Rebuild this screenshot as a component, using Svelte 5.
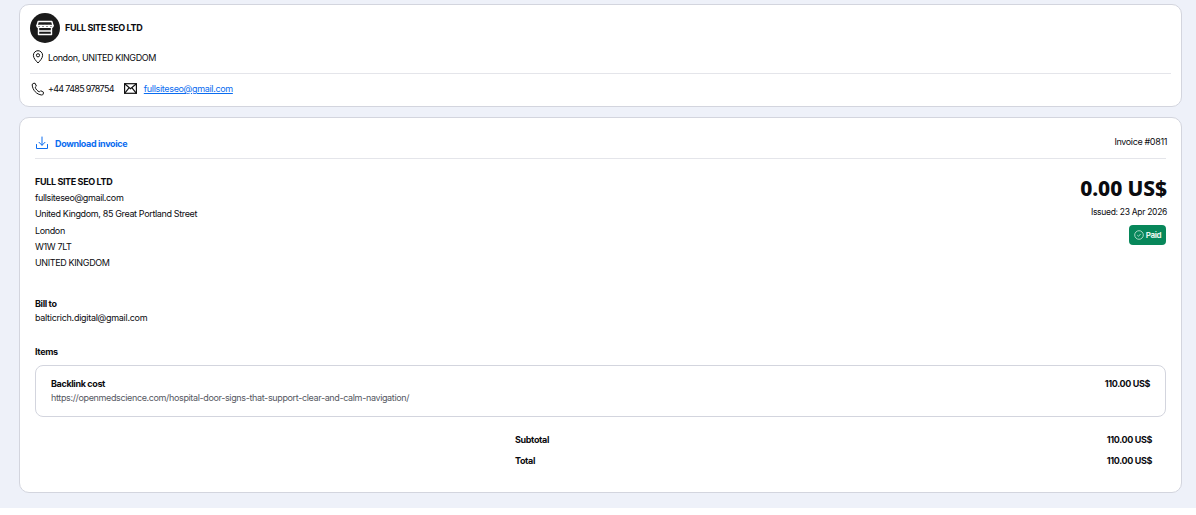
<script>
  const seller = ['fullsiteseo@gmail.com', 'United Kingdom, 85 Great Portland Street', 'London', 'W1W 7LT', 'UNITED KINGDOM'];
</script>

<div class="page">
  <section class="card head">
    <div class="brand">
      <span class="logo">
        <svg width="20" height="20" viewBox="0 0 20 20" fill="none" stroke="#fff" stroke-width="1.4" stroke-linejoin="round" stroke-linecap="round">
          <path d="M3.200 3.500h13.600l1.200 4c0 1.300-1 1.900-2 1.900s-2-.7-2-1.900c0 1.200-1 1.900-2 1.900s-2-.7-2-1.900c0 1.200-1 1.900-2 1.900s-2-.7-2-1.900c0 1.200-1 1.900-2 1.900s-2-.6-2-1.900z"/>
          <path d="M3.500 9.500v7h13v-7M2 7.500h16M3.500 13h13"/>
        </svg>
      </span>
      <b>FULL SITE SEO LTD</b>
    </div>
    <div class="loc">
      <svg width="14" height="14" viewBox="0 0 14 14" fill="none" stroke="#111" stroke-width="1">
        <path d="M7 13c-2-2.200-4.600-4.800-4.600-7.700a4.600 4.600 0 0 1 9.200 0C11.600 8.200 9 10.800 7 13z"/>
        <circle cx="7" cy="5.300" r="1.600"/>
      </svg>
      <span>London, UNITED KINGDOM</span>
    </div>
    <div class="contact">
      <svg width="14" height="14" viewBox="0 0 14 14" fill="none" stroke="#111" stroke-width="1" stroke-linejoin="round">
        <path d="M2.100 1.500l1.900-.3 1.400 2.900-1.200 1.100c.6 2.200 2.200 3.900 4.300 4.700l1.200-1.200 2.800 1.500-.3 1.900c-.2.600-.8 1-1.500.9C5.700 12.500 1.600 8.200 1.200 3c-.1-.7.300-1.300.9-1.500z"/>
      </svg>
      <span class="phone">+44 7485 978754</span>
      <svg class="mail" width="13" height="11" viewBox="0 0 13 11" fill="none" stroke="#111" stroke-width="1.200">
        <rect x=".6" y=".7" width="11.800" height="9.600"/>
        <path d="M.6.700l5.900 5 5.900-5M.6 10.300l4.400-5.500M12.400 10.300L8 4.800"/>
      </svg>
      <a href="#mail">fullsiteseo@gmail.com</a>
    </div>
  </section>

  <section class="card invoice">
    <div class="bar">
      <a class="dl" href="#dl">
        <svg width="14" height="14" viewBox="0 0 14 14" fill="none" stroke="#0a6cf0" stroke-width="1" stroke-linecap="round" stroke-linejoin="round">
          <path d="M7 1v8M4 6.300L7 9.300l3-3M1.500 8.500v4h11v-4"/>
        </svg>
        <span>Download invoice</span>
      </a>
      <span class="num">Invoice #0811</span>
    </div>

    <div class="top">
      <div class="seller">
        <b>FULL SITE SEO LTD</b>
        {#each seller as line}<span>{line}</span>{/each}
      </div>
      <div class="sum">
        <strong>0.00 US$</strong>
        <span>Issued: 23 Apr 2026</span>
        <em>
          <svg width="10" height="10" viewBox="0 0 10 10" fill="none" stroke="#cfe9dc" stroke-width=".8">
            <circle cx="5" cy="5" r="4.300"/><path d="M3.300 5.200l1.200 1.100 2.200-2.400"/>
          </svg>
          Paid
        </em>
      </div>
    </div>

    <div class="bill">
      <b>Bill to</b>
      <span class="bill-mail">balticrich.digital@gmail.com</span>
    </div>

    <b class="items-t">Items</b>
    <div class="item">
      <div class="item-l">
        <b>Backlink cost</b>
        <span>https://openmedscience.com/hospital-door-signs-that-support-clear-and-calm-navigation/</span>
      </div>
      <b>110.00 US$</b>
    </div>

    <div class="totals">
      <div><b>Subtotal</b><b>110.00 US$</b></div>
      <div><b>Total</b><b>110.00 US$</b></div>
    </div>
  </section>
</div>

<style>
  :global(body) { margin: 0; background: #fff; }
  .page {
    height: 508px;
    box-sizing: border-box;
    background: #eef1f9;
    padding: 4px 14px 0 19px;
    font-family: Inter, "Liberation Sans", sans-serif;
    font-size: 9px;
    letter-spacing: -.36px;
    color: #0b0b0f;
    display: flex;
    flex-direction: column;
    gap: 10px;
  }
  b { font-weight: 700; }
  .card {
    background: #fff;
    border: 1px solid #d3d5de;
    border-radius: 10px;
    box-sizing: border-box;
  }
  .head { height: 103px; padding: 8px 10px 0; }
  .brand { display: flex; align-items: center; gap: 5px; height: 30px; }
  .brand b { margin-bottom: 2px; }
  .logo {
    width: 30px; height: 30px; border-radius: 50%;
    background: #1b1b1b; display: flex; align-items: center; justify-content: center;
  }
  .loc { display: flex; align-items: center; gap: 3px; height: 20px; margin: 4px 0 0 1px; padding-bottom: 6px; }
  .loc span { letter-spacing: -.4px; }
  .contact {
    display: flex; align-items: center; border-top: 1px solid #e4e5ea;
    height: 29px; padding-left: 1px; gap: 3px;
  }
  .phone { margin-right: 7px; letter-spacing: -.7px; }
  .mail { margin-right: 4px; }
  .contact a { color: #0a6cf0; letter-spacing: -.33px; }
  .invoice { height: 376px; padding: 0 15px; display: flex; flex-direction: column; }
  .bar {
    height: 41px; flex: none; display: flex; align-items: center; justify-content: space-between;
    border-bottom: 1px solid #e4e5ea; box-sizing: border-box; padding-top: 10px;
  }
  .dl { display: flex; align-items: center; gap: 6px; color: #0a6cf0; text-decoration: none; font-weight: 700; }
  .num { margin: -4px -1px 0 0; }
  .top { display: flex; justify-content: space-between; margin-top: 15px; height: 104px; flex: none; }
  .seller { display: flex; flex-direction: column; }
  .seller b, .seller span { line-height: 16.200px; }
  .sum { display: flex; flex-direction: column; align-items: flex-end; margin-right: -1px; }
  .sum strong { font-size: 21px; line-height: 28px; font-weight: 800; font-family: "Noto Sans", sans-serif; letter-spacing: -.1px; }
  .sum span { font-size: 8.500px; line-height: 14px; margin-top: 3px; letter-spacing: -.3px; }
  .sum em {
    font-style: normal; font-weight: 700; font-size: 8px; color: #e6f5ee; background: #07875a;
    border-radius: 4px; height: 20px; width: 37px; margin: 6px 1px 0 0;
    display: flex; align-items: center; justify-content: center; gap: 2px;
  }
  .bill { display: flex; flex-direction: column; margin-top: 19px; line-height: 14px; }
  .bill-mail { letter-spacing: -.28px; }
  .items-t { margin-top: 20px; line-height: 14px; }
  .item {
    display: flex; justify-content: space-between; margin-top: 6px; height: 52px; box-sizing: border-box; flex: none;
    border: 1px solid #d3d5de; border-radius: 8px; padding: 12px 15px;
  }
  .item-l { display: flex; flex-direction: column; gap: 3px; }
  .item-l span { color: #55585f; }
  .item b, .item span { line-height: 11px; }
  .totals { margin: 16px 14px 0 480px; display: flex; flex-direction: column; gap: 7px; }
  .totals div { display: flex; justify-content: space-between; line-height: 14px; }
</style>
